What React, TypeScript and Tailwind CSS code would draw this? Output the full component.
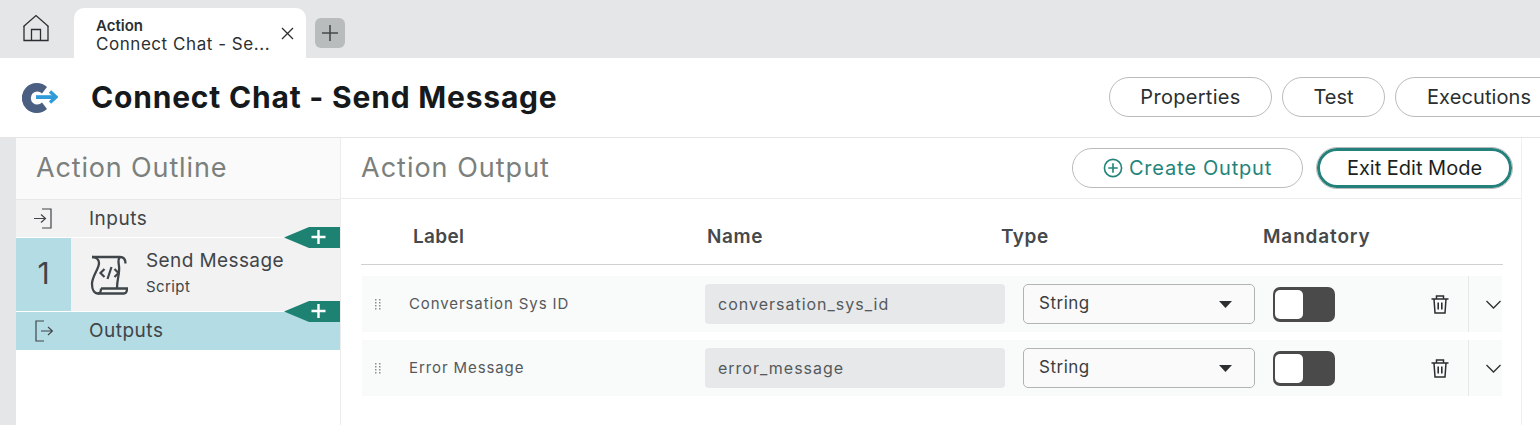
import React from "react";

const font = { fontFamily: "Inter, 'Noto Sans', sans-serif" };

function Home() {
  return (
    <svg width="28" height="28" viewBox="0 0 28 28" fill="none" stroke="#2b2f31" strokeWidth="1.3">
      <path d="M1.500 12.500 14 1.500l12.500 11" />
      <path d="M2 12v14.500h24V12" />
      <path d="M9.500 26.500V15.500h9v11" />
    </svg>
  );
}

function Logo() {
  return (
    <svg width="36" height="30" viewBox="0 0 36 30">
      <path d="M25 4A15 15 0 1 0 25 26L20 19.500A6.500 6.500 0 1 1 20 10.500z" fill="#4b5f82" />
      <path d="M14 12.200H32V16H14z" fill="#2f9bd8" />
      <path d="M28 8.500 34 14l-6 5.500" fill="none" stroke="#2f9bd8" strokeWidth="3.400" />
    </svg>
  );
}

function PlusBadge({ top }: { top: string }) {
  return (
    <div className={`absolute right-0 ${top} w-[56px] h-[21px]`}>
      <svg width="56" height="21" viewBox="0 0 56 21">
        <path d="M0 10.500 25 0h31v21H25z" fill="#1e8272" />
        <path d="M34.500 3v14M27.500 10h14" stroke="#fff" strokeWidth="2.400" />
      </svg>
    </div>
  );
}

function Trash() {
  return (
    <svg width="18" height="19" viewBox="0 0 18 19" fill="none" stroke="#2b2f31" strokeWidth="1.500">
      <path d="M0.500 4h17M5.500 3.500V1h7v2.500" />
      <path d="M3 4l1 14h10l1-14" />
      <path d="M7.200 7.500v7M10.800 7.500v7" strokeWidth="1.600" />
    </svg>
  );
}

function Chevron() {
  return (
    <svg width="15" height="9" viewBox="0 0 15 9" fill="none" stroke="#2b2f31" strokeWidth="1.300">
      <path d="M0.500 1l7 7 7-7" />
    </svg>
  );
}

function Scroll() {
  return (
    <svg width="38" height="40" viewBox="0 0 38 40" fill="none" stroke="#3f4549" strokeWidth="2.300">
      <path d="M2 2h28c3.500 0 5.500 2 5.500 6.500" />
      <path d="M2 2c4 0 7 2.500 7 6 0 6-7 13-7 21 0 5 2 9.500 6 9.500h26c2 0 3-2 3-5H11" />
      <path d="M30 2c-2.500 2-1.500 6-1 9 1 7-2 13-2 22" />
      <path d="M11 33.500c0 3-1 5-3 5" />
      <path d="M14.500 14l-4 4 4 4M24.500 14l4 4-4 4M21.500 12l-4 12" strokeWidth="2.200" />
    </svg>
  );
}

function Row({ label, name }: { label: string; name: string }) {
  return (
    <div className="flex items-center h-[56px] bg-[#f9fafa] text-[#55595b]">
      <svg className="ml-[13px] shrink-0" width="7" height="11" viewBox="0 0 7 11" fill="#8b8f91">
        <rect x="0" y="0" width="1.500" height="1.500" /><rect x="4" y="0" width="1.500" height="1.500" />
        <rect x="0" y="3" width="1.500" height="1.500" /><rect x="4" y="3" width="1.500" height="1.500" />
        <rect x="0" y="6" width="1.500" height="1.500" /><rect x="4" y="6" width="1.500" height="1.500" />
        <rect x="0" y="9" width="1.500" height="1.500" /><rect x="4" y="9" width="1.500" height="1.500" />
      </svg>
      <div className="w-[296px] ml-[27px] text-[15px] tracking-[0.9px] shrink-0">{label}</div>
      <div className="w-[300px] h-[40px] bg-[#e6e8ea] rounded-[4px] flex items-center pl-[13px] text-[16px] tracking-[1px] shrink-0">{name}</div>
      <div className="ml-[18px] w-[232px] h-[40px] border border-[#b0b5b3] rounded-[5px] flex items-center justify-between pl-[15px] pr-[22px] text-[17px] tracking-[0.5px] text-[#3a3e40] bg-[#fafafa] shrink-0">
        <span>String</span>
        <svg width="13" height="7" viewBox="0 0 13 7"><path d="M0 0h13L6.500 7z" fill="#2b2f31" /></svg>
      </div>
      <div className="ml-[18px] w-[62px] h-[35px] bg-[#4a4a4a] rounded-[7px] flex items-center pl-[2px] shrink-0">
        <div className="w-[28px] h-[29px] bg-white rounded-[5px]" />
      </div>
      <div className="ml-[96px] w-[18px] flex shrink-0"><Trash /></div>
      <div className="ml-[19px] h-full border-l border-[#e6e8ea] flex items-center pl-[17px] shrink-0"><Chevron /></div>
    </div>
  );
}

export default function App() {
  return (
    <div className="relative w-[1540px] h-[425px] overflow-hidden bg-white text-[#1b1f21]" style={font}>
      <div className="flex items-end h-[58px] bg-[#e5e6e8]">
        <div className="ml-[22px] w-[52px] self-start mt-[14px]"><Home /></div>
        <div className="w-[232px] h-[50px] bg-white rounded-t-[10px] flex items-center pl-[22px] pr-[12px]">
          <div className="flex-1 min-w-0 leading-[18px] pt-[4px]">
            <div className="text-[15px] font-semibold text-[#2b2f31]">Action</div>
            <div className="text-[17px] tracking-[0.55px] text-[#2b2f31] whitespace-nowrap">Connect Chat - Se...</div>
          </div>
          <svg width="13" height="13" viewBox="0 0 13 13" stroke="#2b2f31" strokeWidth="1.300"><path d="M1 1l11 11M12 1 1 12" /></svg>
        </div>
        <div className="ml-[9px] mb-[10px] w-[30px] h-[30px] bg-[#b9bcbd] rounded-[6px] flex items-center justify-center">
          <svg width="16" height="16" viewBox="0 0 16 16" stroke="#45494b" strokeWidth="1.600"><path d="M8 0v16M0 8h16" /></svg>
        </div>
      </div>

      <div className="flex items-center h-[80px] border-b border-[#e5e5e5]">
        <div className="ml-[22px] w-[69px]"><Logo /></div>
        <div className="text-[30px] font-bold tracking-[0.8px] text-[#16191b] whitespace-nowrap">Connect Chat - Send Message</div>
        <div className="flex gap-[10px] absolute left-[1109px] top-[77px] text-[20px] text-[#2b2f31]">
          <div className="w-[163px] h-[40px] rounded-full border border-[#b9bcbd] flex items-center justify-center tracking-[0.3px]">Properties</div>
          <div className="w-[103px] h-[40px] rounded-full border border-[#b9bcbd] flex items-center justify-center">Test</div>
          <div className="w-[168px] h-[40px] rounded-full border border-[#b9bcbd] flex items-center pl-[31px] tracking-[0.1px]">Executions</div>
        </div>
      </div>

      <div className="flex h-[287px]">
        <div className="w-[16px] bg-[#e5e6e8] shrink-0" />
        <div className="relative w-[325px] shrink-0 border-r border-[#ececec]">
          <div className="h-[62px] bg-[#fafafa] flex items-center pl-[20px] text-[27px] tracking-[0.85px] text-[#7b807d] border-b border-[#e8e8e8]">Action Outline</div>
          <div className="h-[38px] bg-[#f2f2f2] flex items-center text-[#3f4549] text-[19px] tracking-[0.5px] border-b border-white">
            <svg className="ml-[18px]" width="18" height="21" viewBox="0 0 18 21" fill="none" stroke="#3f4549" strokeWidth="1.200">
              <path d="M8 1h9v19H8M0 10.500h11M7 6.500l4.500 4-4.500 4" />
            </svg>
            <span className="ml-[37px] pt-[2px]">Inputs</span>
          </div>
          <div className="flex h-[73px] bg-[#f2f2f2] text-[#3f4549]">
            <div className="w-[55px] bg-[#b4dce4] flex items-center justify-center text-[30px] pb-[2px]">1</div>
            <div className="ml-[19px] self-center"><Scroll /></div>
            <div className="ml-[18px] mt-[9px]">
              <div className="text-[19px] tracking-[0.4px] leading-[28px]">Send Message</div>
              <div className="text-[15px] tracking-[0.4px] leading-[24px]">Script</div>
            </div>
          </div>
          <div className="h-[38px] mt-[1px] bg-[#b4dce4] flex items-center text-[#3f4549] text-[19px] tracking-[0.5px]">
            <svg className="ml-[19px]" width="18" height="22" viewBox="0 0 18 22" fill="none" stroke="#3f4549" strokeWidth="1.200">
              <path d="M9 1H1v20h8M6 11h11M13 7l4.500 4-4.500 4" />
            </svg>
            <span className="ml-[36px] pt-[1px]">Outputs</span>
          </div>
          <PlusBadge top="top-[89px]" />
          <PlusBadge top="top-[163px]" />
        </div>

        <div className="flex-1 min-w-0 border-r-[18px] border-white">
          <div className="w-[1181px] h-full border-r border-[#f0f0f0]">
            <div className="h-[61px] flex items-center border-b border-[#ececec] pl-[20px]">
              <div className="text-[27px] tracking-[1px] text-[#7b807d]">Action Output</div>
              <div className="ml-auto flex gap-[14px] mr-[9px] text-[20px]">
                <div className="w-[231px] h-[40px] rounded-full border border-[#b9bcbd] flex items-center justify-center gap-[6px] text-[#23847a]">
                  <svg width="20" height="20" viewBox="0 0 21 21" fill="none" stroke="#23847a" strokeWidth="1.700">
                    <circle cx="10.500" cy="10.500" r="9" /><path d="M10.500 5.500v10M5.500 10.500h10" />
                  </svg>
                  <span className="tracking-[0.8px]">Create Output</span>
                </div>
                <div className="w-[195px] h-[40px] rounded-full border-[3px] border-[#23807a] outline outline-1 outline-[#b9bcbd] flex items-center justify-center text-[#1b1f21]">Exit Edit Mode</div>
              </div>
            </div>
            <div className="ml-[20px] w-[1142px] h-[66px] border-b border-[#cfd1d1] flex items-center pt-[24px] pb-[12px] text-[19px] font-semibold text-[#45494b]">
              <div className="ml-[52px] w-[294px] tracking-[0.3px]">Label</div>
              <div className="w-[294px] tracking-[0.6px]">Name</div>
              <div className="w-[262px] tracking-[0.5px]">Type</div>
              <div className="tracking-[0.85px]">Mandatory</div>
            </div>
            <div className="ml-[21px] w-[1140px] mt-[11px] flex flex-col gap-[8px]">
              <Row label="Conversation Sys ID" name="conversation_sys_id" />
              <Row label="Error Message" name="error_message" />
            </div>
          </div>
        </div>
      </div>
    </div>
  );
}
